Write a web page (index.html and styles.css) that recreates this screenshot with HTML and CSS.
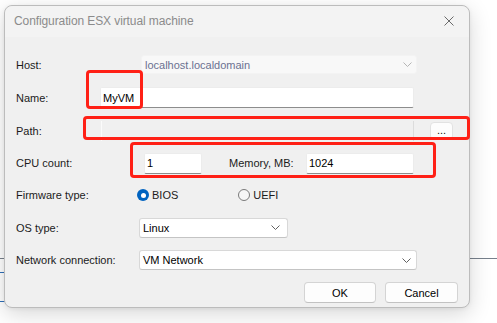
FILE: index.html
```html
<!DOCTYPE html>
<html>
<head>
<meta charset="utf-8">
<link rel="stylesheet" href="styles.css">
</head>
<body>
<div class="desktop">
  <div class="dline gray l1"></div>
  <div class="dline blue l2"></div>
  <div class="dline blue l3"></div>
  <div class="dline gray r1"></div>

  <div class="window">
    <div class="titlebar">
      <span class="title">Configuration ESX virtual machine</span>
      <svg class="close" width="10" height="10" viewBox="0 0 10 10"><path d="M0.5 0.5L9.5 9.5M9.5 0.5L0.5 9.5" stroke="#6a6a6a" stroke-width="1"/></svg>
    </div>
    <div class="content">
      <div class="row r33">
        <span class="lbl">Host:</span>
        <div class="combo disabled host"><span>localhost.localdomain</span><svg class="chev" width="9" height="5" viewBox="0 0 9 5"><path d="M0.5 0.5L4.5 4.5L8.5 0.5" fill="none" stroke="#b5b5b5"/></svg></div>
      </div>
      <div class="row r33">
        <span class="lbl">Name:</span>
        <div class="edit name">MyVM</div>
      </div>
      <div class="row r33">
        <span class="lbl">Path:</span>
        <div class="path"></div>
        <div class="browse">...</div>
      </div>
      <div class="row r32">
        <span class="lbl">CPU count:</span>
        <div class="edit cpu">1</div>
        <span class="lbl2">Memory, MB:</span>
        <div class="edit mem">1024</div>
      </div>
      <div class="row r32">
        <span class="lbl">Firmware type:</span>
        <label class="radio bios"><span class="dot on"></span>BIOS</label>
        <label class="radio uefi"><span class="dot"></span>UEFI</label>
      </div>
      <div class="row r33">
        <span class="lbl">OS type:</span>
        <div class="combo os"><span>Linux</span><svg class="chev" width="9" height="5" viewBox="0 0 9 5"><path d="M0.5 0.5L4.5 4.5L8.5 0.5" fill="none" stroke="#606060"/></svg></div>
      </div>
      <div class="row r32">
        <span class="lbl">Network connection:</span>
        <div class="combo net"><span>VM Network</span><svg class="chev" width="9" height="5" viewBox="0 0 9 5"><path d="M0.5 0.5L4.5 4.5L8.5 0.5" fill="none" stroke="#606060"/></svg></div>
      </div>
      <div class="footer">
        <div class="btn">OK</div>
        <div class="btn">Cancel</div>
      </div>
    </div>
  </div>

  <div class="mark m-name"></div>
  <div class="mark m-path"></div>
  <div class="mark m-cpu"></div>
</div>
</body>
</html>
```
FILE: styles.css
```css
html, body {
  margin: 0;
  padding: 0;
  background: #ffffff;
}
.desktop {
  position: relative;
  width: 497px;
  height: 323px;
  overflow: hidden;
  font-family: "Liberation Sans", Arial, sans-serif;
  font-size: 11px;
  color: #1b1b1b;
}
.dline {
  position: absolute;
  height: 1px;
}
.dline.gray { background: #77808c; }
.dline.blue { background: #2f6fb8; }
.l1 { left: 0; width: 6px; top: 258px; }
.l2 { left: 0; width: 6px; top: 272px; }
.l3 { left: 0; width: 6px; top: 301px; }
.r1 { left: 466px; width: 31px; top: 258px; }

.window {
  position: absolute;
  left: 4px;
  top: 5px;
  width: 466px;
  height: 303px;
  box-sizing: border-box;
  border: 1px solid #bcbcbc;
  border-radius: 8px;
  background: #f0f0f0;
  box-shadow: 0 6px 22px rgba(0, 0, 0, 0.16), 0 1px 4px rgba(0, 0, 0, 0.06);
  overflow: hidden;
}
.titlebar {
  height: 30px;
  background: #f3f3f3;
  display: flex;
  align-items: center;
  justify-content: space-between;
  padding: 0 10px 1px 9px;
  border-radius: 8px 8px 0 0;
}
.title {
  font-size: 12px;
  color: #8b8b8b;
  letter-spacing: -0.1px;
}
.close {
  margin-right: 5px;
}
.content {
  padding: 11px 11px 0 11px;
  display: flex;
  flex-direction: column;
}
.row {
  display: flex;
  align-items: center;
}
.r33 { height: 33px; }
.r32 { height: 32px; }
.lbl {
  width: 84px;
  flex: none;
  white-space: nowrap;
}
.lbl2 {
  width: 77px;
  margin-left: 27px;
  flex: none;
  white-space: nowrap;
}
.edit {
  box-sizing: border-box;
  height: 21px;
  background: #ffffff;
  border: 1px solid #ececec;
  border-bottom: 1px solid #8d8d8d;
  border-radius: 2px;
  padding: 0 3px 0 2px;
  display: flex;
  align-items: center;
  color: #000;
}
.name { width: 314px; }
.cpu { width: 58px; margin-left: 44px; }
.mem { width: 108px; }

.combo {
  box-sizing: border-box;
  display: flex;
  align-items: center;
  justify-content: space-between;
  border: 1px solid #d8d8d8;
  border-bottom-color: #c4c4c4;
  border-radius: 3px;
  background: #ffffff;
  padding: 0 7px 0 3px;
  color: #000;
}
.combo.disabled {
  background: #f8f8f8;
  border-color: #f3f3f3;
  color: #6b7191;
}
.host { width: 276px; height: 19px; margin-left: 41px; padding-right: 4px; }
.os { width: 149px; height: 20px; margin-left: 39px; }
.net { width: 278px; height: 20px; margin-left: 39px; padding-right: 5px; }

.path {
  box-sizing: border-box;
  width: 313px;
  height: 20px;
  margin-left: 1px;
  border-left: 1px solid #fbfbfb;
  border-right: 1px solid #dcdcdc;
}
.browse {
  box-sizing: border-box;
  width: 23px;
  height: 18px;
  margin-left: 16px;
  margin-top: 1px;
  background: #fdfdfd;
  border: 1px solid #e2e2e2;
  border-radius: 4px;
  display: flex;
  justify-content: center;
  align-items: center;
  color: #111;
  line-height: 1;
  padding-bottom: 1px;
}
.radio {
  display: flex;
  align-items: center;
}
.bios { margin-left: 37px; }
.uefi { margin-left: 60px; }
.dot {
  box-sizing: border-box;
  width: 12px;
  height: 12px;
  border-radius: 50%;
  border: 1px solid #7a7a7a;
  background: #f6f6f6;
  margin-right: 3px;
  display: flex;
  align-items: center;
  justify-content: center;
}
.dot.on {
  border: none;
  background: #0063c0;
}
.dot.on::after {
  content: "";
  width: 5px;
  height: 5px;
  border-radius: 50%;
  background: #ffffff;
}
.footer {
  display: flex;
  justify-content: flex-end;
  gap: 9px;
  margin-top: 6px;
  padding-right: 0;
}
.btn {
  box-sizing: border-box;
  height: 21px;
  width: 72px;
  background: #fdfdfd;
  border: 1px solid #d4d4d4;
  border-bottom-color: #c2c2c2;
  border-radius: 4px;
  display: flex;
  align-items: center;
  justify-content: center;
  color: #000;
}
.btn + .btn { width: 73px; }

.mark {
  position: absolute;
  box-sizing: border-box;
  border: 3px solid #ff2016;
  border-radius: 4px;
}
.m-name { left: 86px; top: 70px; width: 57px; height: 39px; }
.m-path { left: 83px; top: 116px; width: 387px; height: 24px; }
.m-cpu { left: 130px; top: 142px; width: 306px; height: 36px; }
```
